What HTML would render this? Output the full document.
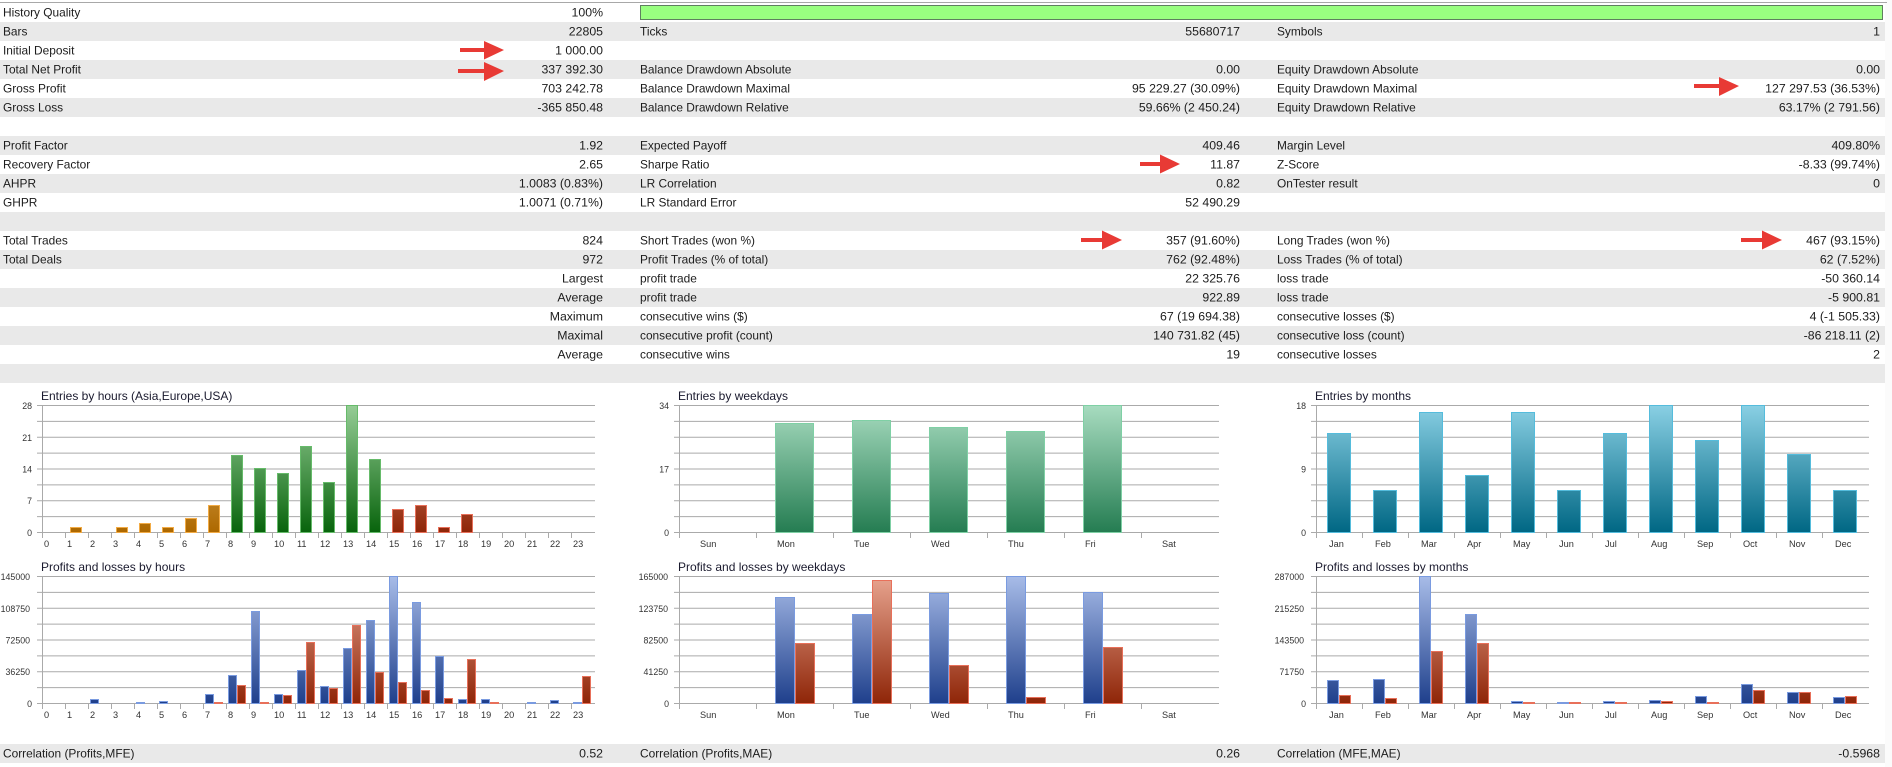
<!DOCTYPE html>
<html lang="en">
<head>
<meta charset="utf-8">
<title>Strategy Tester Report</title>
<style>
html,body{margin:0;padding:0;background:#fff;width:1892px;height:767px;overflow:hidden}
svg{display:block}
.t text{font-family:"Liberation Sans",sans-serif;font-size:11.9px;fill:#1c1c1c}
.t .r{text-anchor:end;font-size:12.3px}
.ti text{font-family:"Liberation Sans",sans-serif;font-size:12px;fill:#1a1a2e}
.a text{font-family:"Liberation Sans",sans-serif;font-size:9.2px;fill:#333}
.a .y text{text-anchor:end;font-size:8.8px}
.grid line{stroke:#aaa;stroke-width:1}
.bar rect{stroke-width:1}
</style>
</head>
<body>
<svg xmlns="http://www.w3.org/2000/svg" width="1892" height="767" viewBox="0 0 1892 767">
<defs>
<linearGradient id="go" gradientUnits="userSpaceOnUse" x1="0" y1="405" x2="0" y2="532"><stop offset="0" stop-color="#f0c880"/><stop offset="1" stop-color="#ad6800"/></linearGradient>
<linearGradient id="gg" gradientUnits="userSpaceOnUse" x1="0" y1="405" x2="0" y2="532"><stop offset="0" stop-color="#96cd96"/><stop offset="1" stop-color="#08640c"/></linearGradient>
<linearGradient id="gr" gradientUnits="userSpaceOnUse" x1="0" y1="405" x2="0" y2="532"><stop offset="0" stop-color="#e8a590"/><stop offset="1" stop-color="#8f2608"/></linearGradient>
<linearGradient id="gw" gradientUnits="userSpaceOnUse" x1="0" y1="405" x2="0" y2="532"><stop offset="0" stop-color="#a8dcc0"/><stop offset="1" stop-color="#257d52"/></linearGradient>
<linearGradient id="gm" gradientUnits="userSpaceOnUse" x1="0" y1="405" x2="0" y2="532"><stop offset="0" stop-color="#8ad0e4"/><stop offset="1" stop-color="#006784"/></linearGradient>
<linearGradient id="gb" gradientUnits="userSpaceOnUse" x1="0" y1="576" x2="0" y2="703"><stop offset="0" stop-color="#a8bce8"/><stop offset="1" stop-color="#1f408c"/></linearGradient>
<linearGradient id="gd" gradientUnits="userSpaceOnUse" x1="0" y1="576" x2="0" y2="703"><stop offset="0" stop-color="#e8a590"/><stop offset="1" stop-color="#8f2608"/></linearGradient>
</defs>

<rect x="1885" y="0" width="7" height="767" fill="#fbfbfb"/>
<rect x="0" y="2" width="1887" height="1" fill="#a8a8a8"/>

<!-- row bands -->
<g fill="#e9e9e9">
<rect x="0" y="22" width="1885" height="19"/>
<rect x="0" y="60" width="1885" height="19"/>
<rect x="0" y="98" width="1885" height="19"/>
<rect x="0" y="136" width="1885" height="19"/>
<rect x="0" y="174" width="1885" height="19"/>
<rect x="0" y="212" width="1885" height="19"/>
<rect x="0" y="250" width="1885" height="19"/>
<rect x="0" y="288" width="1885" height="19"/>
<rect x="0" y="326" width="1885" height="19"/>
<rect x="0" y="364" width="1885" height="19"/>
<rect x="0" y="744" width="1885" height="19"/>
</g>
<rect x="640.5" y="5.5" width="1242" height="14" fill="#99ff80" stroke="#5f7f5f" stroke-width="1"/>

<g class="t">
<text x="3" y="16.5">History Quality</text><text class="r" x="603" y="16.5">100%</text>
<text x="3" y="35.5">Bars</text><text class="r" x="603" y="35.5">22805</text><text x="640" y="35.5">Ticks</text><text class="r" x="1240" y="35.5">55680717</text><text x="1277" y="35.5">Symbols</text><text class="r" x="1880" y="35.5">1</text>
<text x="3" y="54.5">Initial Deposit</text><text class="r" x="603" y="54.5">1 000.00</text>
<text x="3" y="73.5">Total Net Profit</text><text class="r" x="603" y="73.5">337 392.30</text><text x="640" y="73.5">Balance Drawdown Absolute</text><text class="r" x="1240" y="73.5">0.00</text><text x="1277" y="73.5">Equity Drawdown Absolute</text><text class="r" x="1880" y="73.5">0.00</text>
<text x="3" y="92.5">Gross Profit</text><text class="r" x="603" y="92.5">703 242.78</text><text x="640" y="92.5">Balance Drawdown Maximal</text><text class="r" x="1240" y="92.5">95 229.27 (30.09%)</text><text x="1277" y="92.5">Equity Drawdown Maximal</text><text class="r" x="1880" y="92.5">127 297.53 (36.53%)</text>
<text x="3" y="111.5">Gross Loss</text><text class="r" x="603" y="111.5">-365 850.48</text><text x="640" y="111.5">Balance Drawdown Relative</text><text class="r" x="1240" y="111.5">59.66% (2 450.24)</text><text x="1277" y="111.5">Equity Drawdown Relative</text><text class="r" x="1880" y="111.5">63.17% (2 791.56)</text>
<text x="3" y="149.5">Profit Factor</text><text class="r" x="603" y="149.5">1.92</text><text x="640" y="149.5">Expected Payoff</text><text class="r" x="1240" y="149.5">409.46</text><text x="1277" y="149.5">Margin Level</text><text class="r" x="1880" y="149.5">409.80%</text>
<text x="3" y="168.5">Recovery Factor</text><text class="r" x="603" y="168.5">2.65</text><text x="640" y="168.5">Sharpe Ratio</text><text class="r" x="1240" y="168.5">11.87</text><text x="1277" y="168.5">Z-Score</text><text class="r" x="1880" y="168.5">-8.33 (99.74%)</text>
<text x="3" y="187.5">AHPR</text><text class="r" x="603" y="187.5">1.0083 (0.83%)</text><text x="640" y="187.5">LR Correlation</text><text class="r" x="1240" y="187.5">0.82</text><text x="1277" y="187.5">OnTester result</text><text class="r" x="1880" y="187.5">0</text>
<text x="3" y="206.5">GHPR</text><text class="r" x="603" y="206.5">1.0071 (0.71%)</text><text x="640" y="206.5">LR Standard Error</text><text class="r" x="1240" y="206.5">52 490.29</text>
<text x="3" y="244.5">Total Trades</text><text class="r" x="603" y="244.5">824</text><text x="640" y="244.5">Short Trades (won %)</text><text class="r" x="1240" y="244.5">357 (91.60%)</text><text x="1277" y="244.5">Long Trades (won %)</text><text class="r" x="1880" y="244.5">467 (93.15%)</text>
<text x="3" y="263.5">Total Deals</text><text class="r" x="603" y="263.5">972</text><text x="640" y="263.5">Profit Trades (% of total)</text><text class="r" x="1240" y="263.5">762 (92.48%)</text><text x="1277" y="263.5">Loss Trades (% of total)</text><text class="r" x="1880" y="263.5">62 (7.52%)</text>
<text class="r" x="603" y="282.5">Largest</text><text x="640" y="282.5">profit trade</text><text class="r" x="1240" y="282.5">22 325.76</text><text x="1277" y="282.5">loss trade</text><text class="r" x="1880" y="282.5">-50 360.14</text>
<text class="r" x="603" y="301.5">Average</text><text x="640" y="301.5">profit trade</text><text class="r" x="1240" y="301.5">922.89</text><text x="1277" y="301.5">loss trade</text><text class="r" x="1880" y="301.5">-5 900.81</text>
<text class="r" x="603" y="320.5">Maximum</text><text x="640" y="320.5">consecutive wins ($)</text><text class="r" x="1240" y="320.5">67 (19 694.38)</text><text x="1277" y="320.5">consecutive losses ($)</text><text class="r" x="1880" y="320.5">4 (-1 505.33)</text>
<text class="r" x="603" y="339.5">Maximal</text><text x="640" y="339.5">consecutive profit (count)</text><text class="r" x="1240" y="339.5">140 731.82 (45)</text><text x="1277" y="339.5">consecutive loss (count)</text><text class="r" x="1880" y="339.5">-86 218.11 (2)</text>
<text class="r" x="603" y="358.5">Average</text><text x="640" y="358.5">consecutive wins</text><text class="r" x="1240" y="358.5">19</text><text x="1277" y="358.5">consecutive losses</text><text class="r" x="1880" y="358.5">2</text>
<text x="3" y="757.5">Correlation (Profits,MFE)</text><text class="r" x="603" y="757.5">0.52</text><text x="640" y="757.5">Correlation (Profits,MAE)</text><text class="r" x="1240" y="757.5">0.26</text><text x="1277" y="757.5">Correlation (MFE,MAE)</text><text class="r" x="1880" y="757.5">-0.5968</text>
</g>

<!-- arrows -->
<g fill="#e83a35">
<path d="M460 48H484V41L504 50L484 59.5V52H460Z"/>
<path d="M458 69H484V62L504 71L484 81V73H458Z"/>
<path d="M1694 84H1719V77L1739 86L1719 96V88H1694Z"/>
<path d="M1140 162H1160V154.5L1180 164L1160 173.5V166H1140Z"/>
<path d="M1081 238H1102V230.5L1122 240L1102 249.5V242H1081Z"/>
<path d="M1741 238H1762V230.5L1782 240L1762 249.5V242H1741Z"/>
</g>

<!-- titles -->
<g class="ti">
<text x="41" y="400">Entries by hours (Asia,Europe,USA)</text>
<text x="678" y="400">Entries by weekdays</text>
<text x="1315" y="400">Entries by months</text>
<text x="41" y="571">Profits and losses by hours</text>
<text x="678" y="571">Profits and losses by weekdays</text>
<text x="1315" y="571">Profits and losses by months</text>
</g>

<!-- grids -->
<g class="grid">
<!-- chart 1 -->
<path d="M37 405.5H595M37 421.375H595M37 437.25H595M37 453.125H595M37 469H595M37 484.875H595M37 500.75H595M37 516.625H595M37 532.5H595M42.5 405V538" fill="none" stroke="#aaa"/>
<path d="M65.5 532V538M88.5 532V538M111.5 532V538M134.5 532V538M157.5 532V538M180.5 532V538M203.5 532V538M226.5 532V538M249.5 532V538M272.5 532V538M295.5 532V538M318.5 532V538M341.5 532V538M364.5 532V538M387.5 532V538M410.5 532V538M433.5 532V538M456.5 532V538M479.5 532V538M502.5 532V538M525.5 532V538M548.5 532V538M571.5 532V538" fill="none" stroke="#aaa"/>
<!-- chart 2 -->
<path d="M674 405.5H1219M674 421.375H1219M674 437.25H1219M674 453.125H1219M674 469H1219M674 484.875H1219M674 500.75H1219M674 516.625H1219M674 532.5H1219M679.5 405V538M756.5 532V538M833.5 532V538M910.5 532V538M987.5 532V538M1064.5 532V538M1141.5 532V538" fill="none" stroke="#aaa"/>
<!-- chart 3 -->
<path d="M1311 405.5H1869M1311 421.375H1869M1311 437.25H1869M1311 453.125H1869M1311 469H1869M1311 484.875H1869M1311 500.75H1869M1311 516.625H1869M1311 532.5H1869M1316.5 405V538M1362.5 532V538M1408.5 532V538M1454.5 532V538M1500.5 532V538M1546.5 532V538M1592.5 532V538M1638.5 532V538M1684.5 532V538M1730.5 532V538M1776.5 532V538M1822.5 532V538" fill="none" stroke="#aaa"/>
<!-- chart 4 -->
<path d="M37 576.5H595M37 592.375H595M37 608.25H595M37 624.125H595M37 640H595M37 655.875H595M37 671.75H595M37 687.625H595M37 703.5H595M42.5 576V709" fill="none" stroke="#aaa"/>
<path d="M65.5 703V709M88.5 703V709M111.5 703V709M134.5 703V709M157.5 703V709M180.5 703V709M203.5 703V709M226.5 703V709M249.5 703V709M272.5 703V709M295.5 703V709M318.5 703V709M341.5 703V709M364.5 703V709M387.5 703V709M410.5 703V709M433.5 703V709M456.5 703V709M479.5 703V709M502.5 703V709M525.5 703V709M548.5 703V709M571.5 703V709" fill="none" stroke="#aaa"/>
<!-- chart 5 -->
<path d="M674 576.5H1219M674 592.375H1219M674 608.25H1219M674 624.125H1219M674 640H1219M674 655.875H1219M674 671.75H1219M674 687.625H1219M674 703.5H1219M679.5 576V709M756.5 703V709M833.5 703V709M910.5 703V709M987.5 703V709M1064.5 703V709M1141.5 703V709" fill="none" stroke="#aaa"/>
<!-- chart 6 -->
<path d="M1311 576.5H1869M1311 592.375H1869M1311 608.25H1869M1311 624.125H1869M1311 640H1869M1311 655.875H1869M1311 671.75H1869M1311 687.625H1869M1311 703.5H1869M1316.5 576V709M1362.5 703V709M1408.5 703V709M1454.5 703V709M1500.5 703V709M1546.5 703V709M1592.5 703V709M1638.5 703V709M1684.5 703V709M1730.5 703V709M1776.5 703V709M1822.5 703V709" fill="none" stroke="#aaa"/>
</g>

<!-- chart 1 bars -->
<g class="bar" fill="url(#go)" stroke="#f2ab45">
<rect x="70.5" y="527.5" width="11" height="5"/><rect x="116.5" y="527.5" width="11" height="5"/><rect x="139.5" y="523.5" width="11" height="9"/><rect x="162.5" y="527.5" width="11" height="5"/><rect x="185.5" y="518.5" width="11" height="14"/><rect x="208.5" y="505.5" width="11" height="27"/>
</g>
<g class="bar" fill="url(#gg)" stroke="#66bb6a">
<rect x="231.5" y="455.5" width="11" height="77"/><rect x="254.5" y="468.5" width="11" height="64"/><rect x="277.5" y="473.5" width="11" height="59"/><rect x="300.5" y="446.5" width="11" height="86"/><rect x="323.5" y="482.5" width="11" height="50"/><rect x="346.5" y="405.5" width="11" height="127"/><rect x="369.5" y="459.5" width="11" height="73"/>
</g>
<g class="bar" fill="url(#gr)" stroke="#e8705a">
<rect x="392.5" y="509.5" width="11" height="23"/><rect x="415.5" y="505.5" width="11" height="27"/><rect x="438.5" y="527.5" width="11" height="5"/><rect x="461.5" y="514.5" width="11" height="18"/>
</g>
<!-- chart 2 bars -->
<g class="bar" fill="url(#gw)" stroke="#7fd0a5">
<rect x="775.5" y="423.5" width="38" height="109"/><rect x="852.5" y="420.5" width="38" height="112"/><rect x="929.5" y="427.5" width="38" height="105"/><rect x="1006.5" y="431.5" width="38" height="101"/><rect x="1083.5" y="405.5" width="38" height="127"/>
</g>
<!-- chart 3 bars -->
<g class="bar" fill="url(#gm)" stroke="#55bcdc">
<rect x="1327.5" y="433.5" width="23" height="99"/><rect x="1373.5" y="490.5" width="23" height="42"/><rect x="1419.5" y="412.5" width="23" height="120"/><rect x="1465.5" y="475.5" width="23" height="57"/><rect x="1511.5" y="412.5" width="23" height="120"/><rect x="1557.5" y="490.5" width="23" height="42"/><rect x="1603.5" y="433.5" width="23" height="99"/><rect x="1649.5" y="405.5" width="23" height="127"/><rect x="1695.5" y="440.5" width="23" height="92"/><rect x="1741.5" y="405.5" width="23" height="127"/><rect x="1787.5" y="454.5" width="23" height="78"/><rect x="1833.5" y="490.5" width="23" height="42"/>
</g>
<!-- chart 4 bars -->
<g class="bar" fill="url(#gb)" stroke="#7a9be0">
<rect x="90.5" y="699.5" width="8" height="4"/><rect x="136.5" y="702.5" width="8" height="1"/><rect x="159.5" y="701.5" width="8" height="2"/><rect x="205.5" y="694.5" width="8" height="9"/><rect x="228.5" y="675.5" width="8" height="28"/><rect x="251.5" y="611.5" width="8" height="92"/><rect x="274.5" y="694.5" width="8" height="9"/><rect x="297.5" y="670.5" width="8" height="33"/><rect x="320.5" y="686.5" width="8" height="17"/><rect x="343.5" y="648.5" width="8" height="55"/><rect x="366.5" y="620.5" width="8" height="83"/><rect x="389.5" y="576.5" width="8" height="127"/><rect x="412.5" y="602.5" width="8" height="101"/><rect x="435.5" y="656.5" width="8" height="47"/><rect x="458.5" y="699.5" width="8" height="4"/><rect x="481.5" y="699.5" width="8" height="4"/><rect x="527.5" y="702.5" width="8" height="1"/><rect x="550.5" y="700.5" width="8" height="3"/><rect x="573.5" y="702.5" width="8" height="1"/>
</g>
<g class="bar" fill="url(#gd)" stroke="#e8705a">
<rect x="214.5" y="702.5" width="8" height="1"/><rect x="237.5" y="685.5" width="8" height="18"/><rect x="260.5" y="702.5" width="8" height="1"/><rect x="283.5" y="695.5" width="8" height="8"/><rect x="306.5" y="642.5" width="8" height="61"/><rect x="329.5" y="688.5" width="8" height="15"/><rect x="352.5" y="625.5" width="8" height="78"/><rect x="375.5" y="672.5" width="8" height="31"/><rect x="398.5" y="682.5" width="8" height="21"/><rect x="421.5" y="690.5" width="8" height="13"/><rect x="444.5" y="698.5" width="8" height="5"/><rect x="467.5" y="659.5" width="8" height="44"/><rect x="490.5" y="702.5" width="8" height="1"/><rect x="582.5" y="676.5" width="8" height="27"/>
</g>
<!-- chart 5 bars -->
<g class="bar" fill="url(#gb)" stroke="#7a9be0">
<rect x="775.5" y="597.5" width="19" height="106"/><rect x="852.5" y="614.5" width="19" height="89"/><rect x="929.5" y="593.5" width="19" height="110"/><rect x="1006.5" y="576.5" width="19" height="127"/><rect x="1083.5" y="592.5" width="19" height="111"/>
</g>
<g class="bar" fill="url(#gd)" stroke="#e8705a">
<rect x="795.5" y="643.5" width="19" height="60"/><rect x="872.5" y="580.5" width="19" height="123"/><rect x="949.5" y="665.5" width="19" height="38"/><rect x="1026.5" y="697.5" width="19" height="6"/><rect x="1103.5" y="647.5" width="19" height="56"/>
</g>
<!-- chart 6 bars -->
<g class="bar" fill="url(#gb)" stroke="#7a9be0">
<rect x="1327.5" y="680.5" width="11" height="23"/><rect x="1373.5" y="679.5" width="11" height="24"/><rect x="1419.5" y="576.5" width="11" height="127"/><rect x="1465.5" y="614.5" width="11" height="89"/><rect x="1511.5" y="701.5" width="11" height="2"/><rect x="1557.5" y="702.5" width="11" height="1"/><rect x="1603.5" y="701.5" width="11" height="2"/><rect x="1649.5" y="700.5" width="11" height="3"/><rect x="1695.5" y="696.5" width="11" height="7"/><rect x="1741.5" y="684.5" width="11" height="19"/><rect x="1787.5" y="692.5" width="11" height="11"/><rect x="1833.5" y="697.5" width="11" height="6"/>
</g>
<g class="bar" fill="url(#gd)" stroke="#e8705a">
<rect x="1339.5" y="695.5" width="11" height="8"/><rect x="1385.5" y="698.5" width="11" height="5"/><rect x="1431.5" y="651.5" width="11" height="52"/><rect x="1477.5" y="643.5" width="11" height="60"/><rect x="1523.5" y="702.5" width="11" height="1"/><rect x="1569.5" y="702.5" width="11" height="1"/><rect x="1615.5" y="702.5" width="11" height="1"/><rect x="1661.5" y="701.5" width="11" height="2"/><rect x="1707.5" y="702.5" width="11" height="1"/><rect x="1753.5" y="690.5" width="11" height="13"/><rect x="1799.5" y="692.5" width="11" height="11"/><rect x="1845.5" y="696.5" width="11" height="7"/>
</g>

<!-- axis labels -->
<g class="a">
<g class="y">
<text x="32" y="409">28</text><text x="32" y="441">21</text><text x="32" y="472.500">14</text><text x="32" y="504">7</text><text x="32" y="536">0</text>
<text x="669" y="409">34</text><text x="669" y="472.500">17</text><text x="669" y="536">0</text>
<text x="1306" y="409">18</text><text x="1306" y="472.500">9</text><text x="1306" y="536">0</text>
<text x="30" y="580">145000</text><text x="30" y="612">108750</text><text x="30" y="643.500">72500</text><text x="30" y="675">36250</text><text x="32" y="707">0</text>
<text x="668" y="580">165000</text><text x="668" y="612">123750</text><text x="668" y="643.500">82500</text><text x="668" y="675">41250</text><text x="669" y="707">0</text>
<text x="1304" y="580">287000</text><text x="1304" y="612">215250</text><text x="1304" y="643.500">143500</text><text x="1304" y="675">71750</text><text x="1306" y="707">0</text>
</g>
<text x="44" y="547">0</text><text x="67" y="547">1</text><text x="90" y="547">2</text><text x="113" y="547">3</text><text x="136" y="547">4</text><text x="159" y="547">5</text><text x="182" y="547">6</text><text x="205" y="547">7</text><text x="228" y="547">8</text><text x="251" y="547">9</text><text x="274" y="547">10</text><text x="297" y="547">11</text><text x="320" y="547">12</text><text x="343" y="547">13</text><text x="366" y="547">14</text><text x="389" y="547">15</text><text x="412" y="547">16</text><text x="435" y="547">17</text><text x="458" y="547">18</text><text x="481" y="547">19</text><text x="504" y="547">20</text><text x="527" y="547">21</text><text x="550" y="547">22</text><text x="573" y="547">23</text>
<text x="44" y="718">0</text><text x="67" y="718">1</text><text x="90" y="718">2</text><text x="113" y="718">3</text><text x="136" y="718">4</text><text x="159" y="718">5</text><text x="182" y="718">6</text><text x="205" y="718">7</text><text x="228" y="718">8</text><text x="251" y="718">9</text><text x="274" y="718">10</text><text x="297" y="718">11</text><text x="320" y="718">12</text><text x="343" y="718">13</text><text x="366" y="718">14</text><text x="389" y="718">15</text><text x="412" y="718">16</text><text x="435" y="718">17</text><text x="458" y="718">18</text><text x="481" y="718">19</text><text x="504" y="718">20</text><text x="527" y="718">21</text><text x="550" y="718">22</text><text x="573" y="718">23</text>
<text x="700" y="547">Sun</text><text x="777" y="547">Mon</text><text x="854" y="547">Tue</text><text x="931" y="547">Wed</text><text x="1008" y="547">Thu</text><text x="1085" y="547">Fri</text><text x="1162" y="547">Sat</text>
<text x="700" y="718">Sun</text><text x="777" y="718">Mon</text><text x="854" y="718">Tue</text><text x="931" y="718">Wed</text><text x="1008" y="718">Thu</text><text x="1085" y="718">Fri</text><text x="1162" y="718">Sat</text>
<text x="1329" y="547">Jan</text><text x="1375" y="547">Feb</text><text x="1421" y="547">Mar</text><text x="1467" y="547">Apr</text><text x="1513" y="547">May</text><text x="1559" y="547">Jun</text><text x="1605" y="547">Jul</text><text x="1651" y="547">Aug</text><text x="1697" y="547">Sep</text><text x="1743" y="547">Oct</text><text x="1789" y="547">Nov</text><text x="1835" y="547">Dec</text>
<text x="1329" y="718">Jan</text><text x="1375" y="718">Feb</text><text x="1421" y="718">Mar</text><text x="1467" y="718">Apr</text><text x="1513" y="718">May</text><text x="1559" y="718">Jun</text><text x="1605" y="718">Jul</text><text x="1651" y="718">Aug</text><text x="1697" y="718">Sep</text><text x="1743" y="718">Oct</text><text x="1789" y="718">Nov</text><text x="1835" y="718">Dec</text>
</g>
</svg>
</body>
</html>
